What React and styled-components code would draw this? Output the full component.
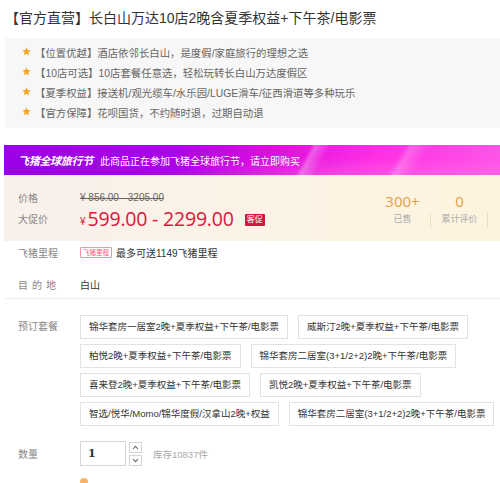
import styled, { createGlobalStyle } from "styled-components";

const GlobalStyle = createGlobalStyle`
  html, body {
    margin: 0;
    padding: 0;
    background: #fff;
  }
  body {
    font-family: "Liberation Sans", "Noto Sans CJK SC", sans-serif;
    color: #333;
    overflow: hidden;
  }
`;

const features = [
  ["【位置优越】", "酒店依邻长白山，是度假/家庭旅行的理想之选"],
  ["【10店可选】", "10店套餐任意选，轻松玩转长白山万达度假区"],
  ["【夏季权益】", "接送机/观光缆车/水乐园/LUGE滑车/征西滑道等多种玩乐"],
  ["【官方保障】", "花呗国货，不约随时退，过期自动退"],
];

const packages = [
  "锦华套房一居室2晚+夏季权益+下午茶/电影票",
  "威斯汀2晚+夏季权益+下午茶/电影票",
  "柏悦2晚+夏季权益+下午茶/电影票",
  "锦华套房二居室(3+1/2+2)2晚+下午茶/电影票",
  "喜来登2晚+夏季权益+下午茶/电影票",
  "凯悦2晚+夏季权益+下午茶/电影票",
  "智选/悦华/Momo/锦华度假/汉拿山2晚+权益",
  "锦华套房二居室(3+1/2+2)2晚+下午茶/电影票",
];

function Star() {
  return (
    <StarIcon viewBox="0 0 10 10">
      <path
        d="M5 0.4 L6.35 3.3 L9.6 3.65 L7.15 5.85 L7.85 9.1 L5 7.45 L2.15 9.1 L2.85 5.85 L0.4 3.65 L3.65 3.3 Z"
        fill="#f5a623"
      />
    </StarIcon>
  );
}

function Chevron({ up }) {
  return (
    <svg width="7" height="5" viewBox="0 0 7 5">
      <path
        d={up ? "M1 4 L3.5 1.3 L6 4" : "M1 1 L3.5 3.7 L6 1"}
        fill="none"
        stroke="#666"
        strokeWidth="1.1"
      />
    </svg>
  );
}

export default function App() {
  return (
    <Page>
      <GlobalStyle />
      <Title>【官方直营】长白山万达10店2晚含夏季权益+下午茶/电影票</Title>

      <FeatureBox>
        {features.map(([tag, text]) => (
          <FeatureRow key={tag}>
            <Star />
            <span>
              {tag}
              {text}
            </span>
          </FeatureRow>
        ))}
      </FeatureBox>

      <PromoBanner>
        <PromoLogo>飞猪全球旅行节</PromoLogo>
        <PromoText>此商品正在参加飞猪全球旅行节，请立即购买</PromoText>
      </PromoBanner>

      <PriceArea>
        <PriceRows>
          <PriceRow>
            <Label>价格</Label>
            <OldPrice>¥ 856.00 - 3205.00</OldPrice>
          </PriceRow>
          <PriceRow>
            <Label>大促价</Label>
            <Yen>¥</Yen>
            <BigPrice>599.00 - 2299.00</BigPrice>
            <Badge>客促</Badge>
          </PriceRow>
        </PriceRows>
        <Stats>
          <Stat>
            <StatNum>300+</StatNum>
            <StatLabel>已售</StatLabel>
          </Stat>
          <Stat>
            <StatNum>0</StatNum>
            <StatLabel>累计评价</StatLabel>
          </Stat>
        </Stats>
      </PriceArea>

      <InfoRow>
        <Label>飞猪里程</Label>
        <MileTag>飞猪里程</MileTag>
        <Value>最多可送1149飞猪里程</Value>
      </InfoRow>

      <DestRow>
        <Label $spaced>目的地</Label>
        <Value>白山</Value>
      </DestRow>

      <PackageSection>
        <PackLabel>预订套餐</PackLabel>
        <PackageList>
          {packages.map((p, i) => (
            <PackageButton key={i}>{p}</PackageButton>
          ))}
        </PackageList>
      </PackageSection>

      <QtyRow>
        <Label>数量</Label>
        <QtyInput>1</QtyInput>
        <Spinner>
          <SpinBtn>
            <Chevron up />
          </SpinBtn>
          <SpinBtn>
            <Chevron />
          </SpinBtn>
        </Spinner>
        <Stock>库存10837件</Stock>
      </QtyRow>

      <BottomRow>
        <CouponDot />
      </BottomRow>
    </Page>
  );
}

const Page = styled.div`
  width: 500px;
  height: 483px;
  overflow: hidden;
`;

const Title = styled.h1`
  margin: 0;
  padding: 8px 0 0 5px;
  font-size: 14px;
  font-weight: normal;
  line-height: 20px;
  color: #333;
  white-space: nowrap;
`;

const FeatureBox = styled.div`
  margin: 10px 0 0 5px;
  padding: 4px 0 6px 17px;
  background: #f7f7f7;
`;

const FeatureRow = styled.div`
  display: flex;
  align-items: center;
  gap: 4px;
  height: 20px;
  font-size: 10.4px;
  color: #666;
  white-space: nowrap;
`;

const StarIcon = styled.svg`
  width: 9px;
  height: 9px;
  flex: none;
  margin-top: -1px;
`;

const PromoBanner = styled.div`
  margin: 17px 0 0 4px;
  height: 30px;
  display: flex;
  align-items: center;
  padding-left: 14px;
  background:
    linear-gradient(118deg, transparent 60%, rgba(255, 255, 255, 0.28) 61%, transparent 64%),
    linear-gradient(122deg, transparent 78%, rgba(255, 255, 255, 0.22) 79.5%, transparent 83%),
    radial-gradient(ellipse at 72% 110%, rgba(255, 255, 255, 0.18), transparent 45%),
    linear-gradient(90deg, #9a00e6 0%, #ad00e8 35%, #e010dc 55%, #ff2ee4 75%, #ff55e8 100%);
  color: #fff;
  white-space: nowrap;
`;

const PromoLogo = styled.span`
  font-size: 11px;
  font-weight: bold;
  font-style: italic;
  letter-spacing: -0.3px;
`;

const PromoText = styled.span`
  margin-left: 7px;
  font-size: 10px;
`;

const PriceArea = styled.div`
  margin-left: 4px;
  height: 66px;
  display: flex;
  align-items: flex-start;
  background: linear-gradient(90deg, #f9f0ec 0%, #fbf3e6 45%, #fdf4de 100%);
`;

const PriceRows = styled.div`
  flex: 1;
  padding: 12px 0 0 14px;
`;

const PriceRow = styled.div`
  display: flex;
  align-items: center;
  height: 21px;
`;

const Label = styled.div`
  width: 62px;
  flex: none;
  font-size: 10px;
  color: #888;
  letter-spacing: ${(p) => (p.$spaced ? "4px" : "0")};
`;

const OldPrice = styled.span`
  font-size: 10px;
  color: #666;
  text-decoration: line-through;
`;

const Yen = styled.span`
  font-size: 10px;
  color: #d9173d;
  margin: 6px 2px 0 0;
`;

const BigPrice = styled.span`
  font-family: "Open Sans", "Liberation Sans", sans-serif;
  font-size: 19.5px;
  line-height: 21px;
  color: #d9173d;
  letter-spacing: -0.2px;
`;

const Badge = styled.span`
  margin: 3px 0 0 11px;
  padding: 0 2px;
  height: 12px;
  line-height: 12px;
  font-size: 8px;
  color: #fff;
  background: #d4143c;
  border-radius: 1px;
`;

const Stats = styled.div`
  display: flex;
  padding-top: 16px;
  margin-right: 12px;
`;

const Stat = styled.div`
  position: relative;
  width: 57px;
  display: flex;
  flex-direction: column;
  align-items: center;

  &::after {
    content: "";
    position: absolute;
    right: 0;
    top: 22px;
    height: 15px;
    border-right: 1px solid #ecdcc4;
  }
`;

const StatNum = styled.div`
  font-family: "Open Sans", sans-serif;
  font-size: 15px;
  line-height: 20px;
  color: #e3a04a;
`;

const StatLabel = styled.div`
  font-size: 9px;
  line-height: 16px;
  color: #aaa;
`;

const InfoRow = styled.div`
  display: flex;
  align-items: center;
  height: 22px;
  padding-left: 18px;
`;

const MileTag = styled.span`
  height: 9px;
  line-height: 9px;
  padding: 0 2px;
  font-size: 6.5px;
  color: #ff5577;
  border: 1px solid #ff8fa6;
  border-radius: 1px;
  margin-right: 4px;
`;

const Value = styled.span`
  font-size: 10px;
  color: #333;
`;

const DestRow = styled.div`
  display: flex;
  align-items: center;
  height: 28px;
  margin: 7px 0 0 5px;
  padding-left: 13px;
  border-bottom: 1px solid #eee;
`;

const PackageSection = styled.div`
  display: flex;
  align-items: flex-start;
  padding: 16px 0 0 18px;
`;

const PackLabel = styled(Label)`
  line-height: 24px;
`;

const PackageList = styled.div`
  display: flex;
  flex-wrap: wrap;
  gap: 5px 10px;
`;

const PackageButton = styled.div`
  height: 24px;
  line-height: 22px;
  padding: 0 8px;
  border: 1px solid #e2e2e2;
  background: #fff;
  font-size: 9.5px;
  color: #333;
  white-space: nowrap;
  box-sizing: border-box;
`;

const QtyRow = styled.div`
  display: flex;
  align-items: center;
  padding: 15px 0 0 18px;
`;

const QtyInput = styled.div`
  width: 46px;
  height: 25px;
  box-sizing: border-box;
  border: 1px solid #d6d6d6;
  padding-left: 7px;
  line-height: 23px;
  font-family: "DejaVu Serif", serif;
  font-size: 11px;
  font-weight: bold;
  color: #333;
`;

const Spinner = styled.div`
  display: flex;
  flex-direction: column;
  gap: 2px;
  margin-left: 3px;
`;

const SpinBtn = styled.div`
  width: 13px;
  height: 11px;
  box-sizing: border-box;
  border: 1px solid #d6d6d6;
  display: flex;
  align-items: center;
  justify-content: center;
`;

const Stock = styled.span`
  margin-left: 11px;
  font-size: 9.5px;
  color: #aaa;
`;

const BottomRow = styled.div`
  padding: 12px 0 0 80px;
`;

const CouponDot = styled.div`
  width: 8px;
  height: 8px;
  border-radius: 50%;
  background: #f7b36b;
`;
